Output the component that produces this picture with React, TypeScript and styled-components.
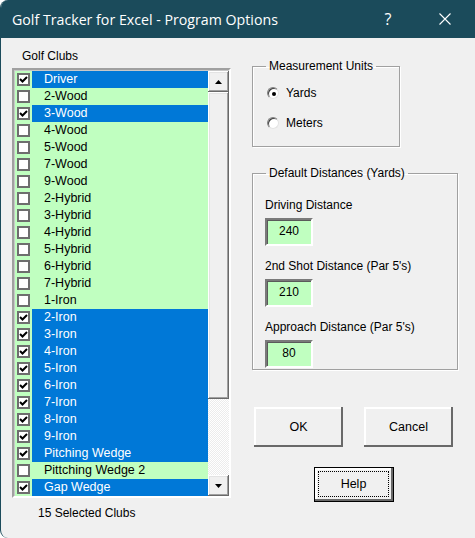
import styled, { createGlobalStyle } from "styled-components";

const GlobalStyle = createGlobalStyle`
  html, body {
    margin: 0;
    padding: 0;
    background: #ffffff;
  }
  body {
    font-family: "Liberation Sans", Arial, sans-serif;
    font-size: 12px;
    color: #000000;
  }
`;

const teal = "#1b4b5b";

const Window = styled.div`
  width: 475px;
  height: 538px;
  box-sizing: border-box;
  border-left: 1px solid ${teal};
  border-radius: 8px 0 0 8px;
  background: #f0f0f0;
  overflow: hidden;
  display: flex;
  flex-direction: column;
`;

const TitleBar = styled.div`
  height: 38px;
  flex-shrink: 0;
  background: ${teal};
  color: #ffffff;
  display: flex;
  align-items: center;
  padding: 0 7px 0 11px;
  font-family: "Open Sans", "Noto Sans", sans-serif;
  font-size: 14.2px;
`;

const Title = styled.div`
  flex: 1;
  white-space: nowrap;
`;

const CaptionButton = styled.div`
  width: 46px;
  height: 38px;
  display: flex;
  align-items: center;
  justify-content: center;
  font-size: 16px;
  & + & {
    margin-left: 11px;
  }
`;

const Body = styled.div`
  flex: 1;
  display: flex;
  padding-left: 11px;
`;

const LeftColumn = styled.div`
  display: flex;
  flex-direction: column;
  padding-top: 12px;
`;

const Caption = styled.div`
  height: 13px;
  line-height: 13px;
  margin: 0 0 5px 10px;
`;

const ListBox = styled.div`
  width: 219px;
  box-sizing: border-box;
  border: 2px solid;
  border-color: #a0a0a0 #ffffff #ffffff #a0a0a0;
  box-shadow: inset 1px 1px 0 #c8c8c8;
  padding: 1px 0 0 1px;
  display: flex;
`;

const Rows = styled.div`
  flex: 1;
  display: flex;
  flex-direction: column;
`;

const Row = styled.div`
  display: flex;
  height: 17px;
`;

const CheckCell = styled.div`
  width: 17px;
  background: #c0ffc0;
  display: flex;
  align-items: center;
  justify-content: center;
`;

const CheckBox = styled.div`
  width: 13px;
  height: 13px;
  box-sizing: border-box;
  border: 2px solid #6e6e6e;
  background: #ffffff;
  display: flex;
  align-items: center;
  justify-content: center;
`;

const ItemLabel = styled.div<{ $selected: boolean }>`
  flex: 1;
  padding-left: 12px;
  line-height: 17px;
  font-size: 12.5px;
  white-space: nowrap;
  background: ${(p) => (p.$selected ? "#0078d7" : "#c0ffc0")};
  color: ${(p) => (p.$selected ? "#ffffff" : "#000000")};
`;

const ScrollBar = styled.div`
  width: 21px;
  display: flex;
  flex-direction: column;
`;

const raised = `
  background: #f0f0f0;
  box-shadow: inset -1px -1px 0 #696969, inset 1px 1px 0 #ffffff,
    inset -2px -2px 0 #a0a0a0, inset 2px 2px 0 #e3e3e3;
`;

const ScrollButton = styled.div`
  height: 21px;
  ${raised}
  display: flex;
  align-items: center;
  justify-content: center;
`;

const Thumb = styled.div`
  height: 307px;
  ${raised}
`;

const Track = styled.div`
  flex: 1;
  background: repeating-conic-gradient(#ffffff 0 25%, #ececec 0 50%) 0 0 / 2px 2px;
`;

const Footer = styled.div`
  height: 13px;
  line-height: 13px;
  margin: 9px 0 0 26px;
`;

const RightColumn = styled.div`
  width: 206px;
  margin-left: 21px;
  padding-top: 22px;
  display: flex;
  flex-direction: column;
`;

const Group = styled.fieldset<{ $width: number }>`
  width: ${(p) => p.$width}px;
  min-width: 0;
  box-sizing: border-box;
  margin: 0;
  padding: 0;
  border: 1px solid #a0a0a0;
  box-shadow: 1px 1px 0 #ffffff, inset 1px 1px 0 #ffffff;
  display: flex;
  flex-direction: column;
  & + & {
    margin-top: 20px;
  }
`;

const Legend = styled.legend`
  margin-left: 13px;
  padding: 0 3px;
  line-height: 13px;
`;

const UnitsBody = styled.div`
  padding: 10px 0 13px 14px;
  display: flex;
  flex-direction: column;
  gap: 10px;
`;

const RadioRow = styled.div`
  height: 20px;
  display: flex;
  align-items: center;
  gap: 7px;
`;

const Radio = styled.div<{ $checked: boolean }>`
  width: 12px;
  height: 12px;
  box-sizing: border-box;
  border-radius: 50%;
  background: #ffffff;
  border: 1px solid;
  border-color: #808080 #e3e3e3 #e3e3e3 #808080;
  box-shadow: inset 1px 1px 0 #404040;
  display: flex;
  align-items: center;
  justify-content: center;
  &::after {
    content: "";
    width: 4px;
    height: 4px;
    border-radius: 50%;
    background: #000000;
    margin: 1px 0 0 1px;
    display: ${(p) => (p.$checked ? "block" : "none")};
  }
`;

const DistanceBody = styled.div`
  padding: 19px 0 1px 12px;
  display: flex;
  flex-direction: column;
  gap: 14.5px;
`;

const Field = styled.div`
  display: flex;
  flex-direction: column;
`;

const FieldLabel = styled.div`
  line-height: 13px;
  margin-bottom: 5.5px;
`;

const NumberBox = styled.div`
  width: 48px;
  height: 28px;
  box-sizing: border-box;
  border: 2px solid;
  border-color: #7a7a7a #ffffff #ffffff #7a7a7a;
  box-shadow: inset 1px 1px 0 #5a5a5a;
  background: #c0ffc0;
  display: flex;
  align-items: center;
  justify-content: center;
  padding-bottom: 2px;
`;

const ButtonArea = styled.div`
  width: 199px;
  margin: 37px 0 0 2px;
  display: flex;
  flex-direction: column;
  align-items: center;
`;

const ButtonRow = styled.div`
  display: flex;
  gap: 21px;
`;

const CommandButton = styled.div<{ $w: number; $h: number; $default?: boolean }>`
  width: ${(p) => p.$w}px;
  height: ${(p) => p.$h}px;
  box-sizing: border-box;
  display: flex;
  align-items: center;
  justify-content: center;
  position: relative;
  background: #f0f0f0;
  border: ${(p) => (p.$default ? "1px solid #000000" : "none")};
  box-shadow: inset -2px -2px 0 #696969, inset 2px 2px 0 #ffffff;
  font-size: 12.5px;
`;

const FocusRing = styled.div`
  position: absolute;
  inset: 3px 4px 4px 3px;
  border: 1px dotted #000000;
`;

const HelpWrap = styled.div`
  margin-top: 20px;
`;

type Club = [string, boolean];

const clubs: Club[] = [
  ["Driver", true],
  ["2-Wood", false],
  ["3-Wood", true],
  ["4-Wood", false],
  ["5-Wood", false],
  ["7-Wood", false],
  ["9-Wood", false],
  ["2-Hybrid", false],
  ["3-Hybrid", false],
  ["4-Hybrid", false],
  ["5-Hybrid", false],
  ["6-Hybrid", false],
  ["7-Hybrid", false],
  ["1-Iron", false],
  ["2-Iron", true],
  ["3-Iron", true],
  ["4-Iron", true],
  ["5-Iron", true],
  ["6-Iron", true],
  ["7-Iron", true],
  ["8-Iron", true],
  ["9-Iron", true],
  ["Pitching Wedge", true],
  ["Pittching Wedge 2", false],
  ["Gap Wedge", true],
];

const Tick = () => (
  <svg width="9" height="9" viewBox="0 0 9 9">
    <path d="M1 4 L3.5 6.5 L8 2" fill="none" stroke="#000" strokeWidth="2" />
  </svg>
);

const Arrow = ({ down }: { down?: boolean }) => (
  <svg width="7" height="4" viewBox="0 0 7 4">
    <path d={down ? "M0 0 H7 L3.5 4 Z" : "M0 4 H7 L3.5 0 Z"} fill="#000" />
  </svg>
);

const CloseIcon = () => (
  <svg width="12" height="12" viewBox="0 0 12 12">
    <path d="M0.5 0.5 L11.5 11.5 M11.5 0.5 L0.5 11.5" stroke="#fff" strokeWidth="1.1" />
  </svg>
);

const distances = [
  ["Driving Distance", "240"],
  ["2nd Shot Distance (Par 5's)", "210"],
  ["Approach Distance (Par 5's)", "80"],
];

export default function App() {
  return (
    <>
      <GlobalStyle />
      <Window>
        <TitleBar>
          <Title>Golf Tracker for Excel - Program Options</Title>
          <CaptionButton>?</CaptionButton>
          <CaptionButton>
            <CloseIcon />
          </CaptionButton>
        </TitleBar>
        <Body>
          <LeftColumn>
            <Caption>Golf Clubs</Caption>
            <ListBox>
              <Rows>
                {clubs.map(([name, on]) => (
                  <Row key={name}>
                    <CheckCell>
                      <CheckBox>{on && <Tick />}</CheckBox>
                    </CheckCell>
                    <ItemLabel $selected={on}>{name}</ItemLabel>
                  </Row>
                ))}
              </Rows>
              <ScrollBar>
                <ScrollButton>
                  <Arrow />
                </ScrollButton>
                <Thumb />
                <Track />
                <ScrollButton>
                  <Arrow down />
                </ScrollButton>
              </ScrollBar>
            </ListBox>
            <Footer>15 Selected Clubs</Footer>
          </LeftColumn>
          <RightColumn>
            <Group $width={148}>
              <Legend>Measurement Units</Legend>
              <UnitsBody>
                <RadioRow>
                  <Radio $checked />
                  Yards
                </RadioRow>
                <RadioRow>
                  <Radio $checked={false} />
                  Meters
                </RadioRow>
              </UnitsBody>
            </Group>
            <Group $width={206}>
              <Legend>Default Distances (Yards)</Legend>
              <DistanceBody>
                {distances.map(([label, value]) => (
                  <Field key={label}>
                    <FieldLabel>{label}</FieldLabel>
                    <NumberBox>{value}</NumberBox>
                  </Field>
                ))}
              </DistanceBody>
            </Group>
            <ButtonArea>
              <ButtonRow>
                <CommandButton $w={89} $h={40}>OK</CommandButton>
                <CommandButton $w={89} $h={40}>Cancel</CommandButton>
              </ButtonRow>
              <HelpWrap>
                <CommandButton $w={80} $h={35} $default>
                  <FocusRing />
                  Help
                </CommandButton>
              </HelpWrap>
            </ButtonArea>
          </RightColumn>
        </Body>
      </Window>
    </>
  );
}
